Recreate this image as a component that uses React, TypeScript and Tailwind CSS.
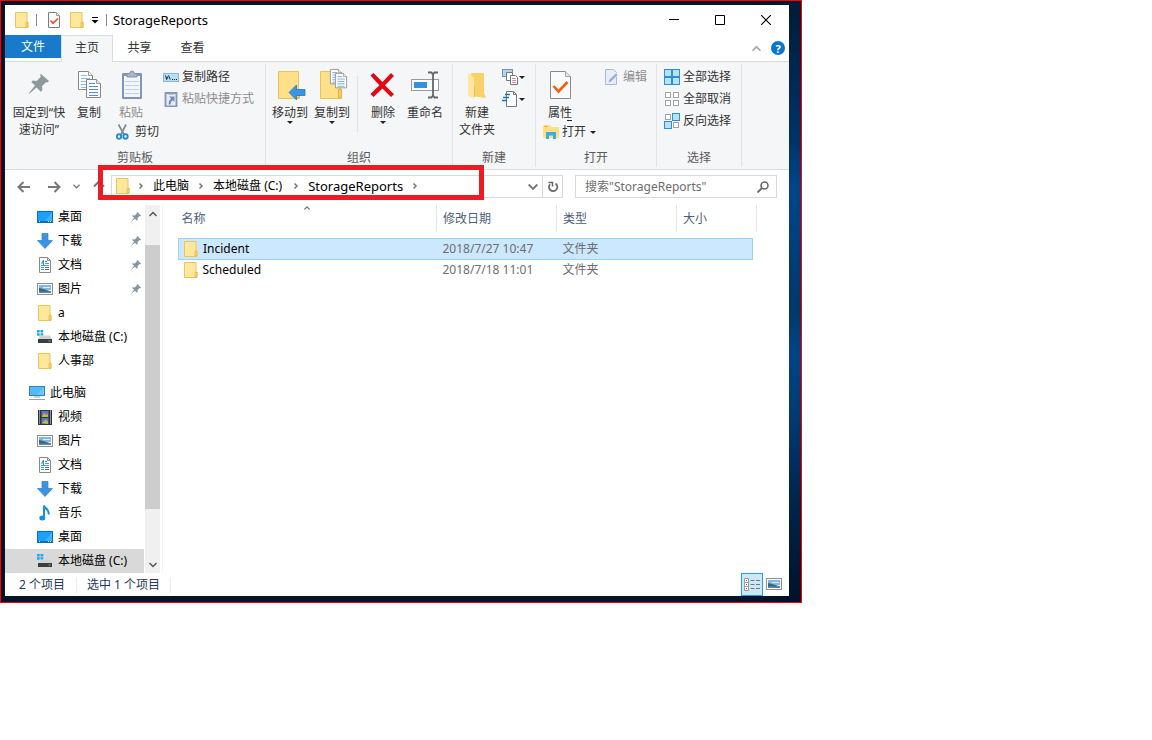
import React from 'react';

type IconProps = { className?: string };

const FolderIcon = ({ className = 'h-4 w-4' }: IconProps) => (
  <svg viewBox="0 0 16 16" className={className} aria-hidden="true">
    <path d="M1.500.500h11.500v9.500h1v5.500H1.500z" fill="#ffe79d" stroke="#e8c65c" />
    <path d="M12 15V10.500h2V15z" fill="#fbdc7a" stroke="#e3b93f" strokeWidth=".8" />
  </svg>
);

const CheckDocIcon = ({ className = 'h-4 w-4' }: IconProps) => (
  <svg viewBox="0 0 16 16" className={className} aria-hidden="true">
    <path d="M1.500.500h8l3 3v12h-11z" fill="#fff" stroke="#7d7d7d" />
    <path d="M9.500.500v3h3" fill="#eee" stroke="#8c8c8c" strokeWidth=".8" />
    <path d="m3.500 8.500 2.500 2.700L11 6.500" fill="none" stroke="#f0531c" strokeWidth="1.700" />
  </svg>
);

const PropertiesIcon = () => (
  <svg viewBox="0 0 32 32" className="h-8 w-8" aria-hidden="true">
    <path d="M6.500 3.500h15l5 5v22h-20z" fill="#fbfbfb" stroke="#8a8a8a" />
    <path d="M21.500 3.500v5h5" fill="#e6e6e6" stroke="#a5a5a5" />
    <path d="m9.500 18 5 5.500 9-9.500" fill="none" stroke="#f2600c" strokeWidth="2.600" />
  </svg>
);

const PinIcon = ({ className = 'h-8 w-8', color = '#8d999f' }: IconProps & { color?: string }) => (
  <svg viewBox="0 0 20 20" className={className} aria-hidden="true">
    <path d="M12 0 20 7l-1.200 1.400-1.600-.4-4.200 4.300.4 3.900-1.600 1.500-4.300-4.200L1.200 19 0 20l.6-1.700L6 11.600 2.300 8l1.500-1.600 3.800.5 4.300-4.200L11 1z" fill={color} />
  </svg>
);

const Sheet = ({ x, y, line = '#5c9cdc' }: { x: number; y: number; line?: string }) => (
  <g transform={`translate(${x} ${y})`}>
    <path d="M.5.500h10l4 4v14H.5z" fill="#fff" stroke="#858585" />
    <path d="M10.500.500v4h4" fill="#eee" stroke="#9a9a9a" />
    <path d="M3 4.500h6M3 7.500h9M3 10.500h9M3 13.500h9M3 16.500h9" stroke={line} />
  </g>
);

const CopyIcon = () => (
  <svg viewBox="0 0 32 32" className="h-8 w-8" aria-hidden="true">
    <Sheet x={5} y={3} line="#8ebbe8" />
    <Sheet x={13} y={11} line="#4a90dd" />
  </svg>
);

const PasteIcon = () => (
  <svg viewBox="0 0 32 32" className="h-8 w-8" aria-hidden="true">
    <rect x="7" y="5" width="20" height="26" rx="1" fill="#8194b8" />
    <rect x="9" y="8" width="16" height="21" fill="#f2f6fb" />
    <path d="M10 13.500h14M10 17.500h14M10 21.500h14M10 25.500h14" stroke="#c3d1e6" />
    <path d="M12 9V6l3-1a2 2 0 0 1 4 0l3 1v3z" fill="#a9b4c6" stroke="#8592a8" />
  </svg>
);

const ScissorsIcon = () => (
  <svg viewBox="0 0 16 16" className="h-4 w-4" aria-hidden="true">
    <path d="M2.500.500 8 10.500M10 .500 5 10.500" stroke="#7b8b9c" strokeWidth="1.700" />
    <circle cx="3" cy="12.500" r="2.200" fill="none" stroke="#1f8fc9" strokeWidth="1.900" />
    <circle cx="9.500" cy="12.500" r="2.200" fill="none" stroke="#1f8fc9" strokeWidth="1.900" />
  </svg>
);

const PathIcon = () => (
  <svg viewBox="0 0 16 16" className="h-4 w-4" aria-hidden="true">
    <rect x=".5" y="4.500" width="15" height="8" fill="#b5defa" stroke="#85b9dd" />
    <path d="m2.500 6.500 1.200 4 1-3M5.500 6.500l1.700 4" fill="none" stroke="#222" />
    <path d="M9 10.500h1M11 10.500h1M13 10.500h1" stroke="#222" />
  </svg>
);

const PasteLinkIcon = () => (
  <svg viewBox="0 0 16 16" className="h-4 w-4" aria-hidden="true">
    <path d="M2.500 2h11v13.300h-11z" fill="#e6ecf6" stroke="#8596b4" strokeWidth="1.800" />
    <path d="M5.500 3V1.500h5V3z" fill="#9dabc3" stroke="#8596b4" />
    <path d="M6 5.500h5.500V11L9.800 9.300Q7.500 10.500 7.500 13.500H5.500q0-3.800 2.400-5.900z" fill="#6f8abf" />
  </svg>
);

const BigFolder = () => (
  <>
    <path d="M4.500 3.500h20v18h1v9h-21z" fill="#ffe08a" stroke="#e8c35a" />
    <path d="M22.500 30v-8.500h3V30z" fill="#f5cf62" stroke="#dfb440" />
  </>
);

const MoveToIcon = () => (
  <svg viewBox="0 0 32 32" className="h-8 w-8" aria-hidden="true">
    <BigFolder />
    <path d="M15 24.500 22.500 17v4.500H31v6h-8.500V32z" fill="#3c95e4" stroke="#2676bd" strokeWidth=".8" />
  </svg>
);

const CopyToIcon = () => (
  <svg viewBox="0 0 32 32" className="h-8 w-8" aria-hidden="true">
    <BigFolder />
    <g transform="translate(14 1) scale(.8)"><Sheet x={0} y={0} /></g>
    <g transform="translate(19 5) scale(.8)"><Sheet x={0} y={0} /></g>
  </svg>
);

const DeleteIcon = () => (
  <svg viewBox="0 0 32 32" className="h-8 w-8" aria-hidden="true">
    <path d="m3.500 7.500 3-2.500L15.500 14 24 5l3 3-9 9.300 9 9-3 2.700-8.500-8.500L6.500 29l-3-3 8.800-8.700z" fill="#e30613" />
  </svg>
);

const RenameIcon = () => (
  <svg viewBox="0 0 32 32" className="h-8 w-8" aria-hidden="true">
    <rect x="2.500" y="11.500" width="27" height="11" fill="#fff" stroke="#9a9a9a" />
    <rect x="5" y="14" width="13" height="6" fill="#3591e0" />
    <path d="M19 4.500h3.500l1.500 2 1.500-2H29M19 29.500h3.500l1.500-2 1.500 2H29M24 5v24" fill="none" stroke="#666" strokeWidth="1.800" />
  </svg>
);

const NewFolderIcon = () => (
  <svg viewBox="0 0 32 32" className="h-8 w-8" aria-hidden="true">
    <path d="M10 5h13v20l2 5-15-2z" fill="#f9d06a" />
    <path d="M7 5l6 4.500V31l-6-3.500z" fill="#ffe5a0" />
    <path d="M13 29V18h1v11z" fill="#efbe4c" />
  </svg>
);

const NewItemIcon = () => (
  <svg viewBox="0 0 16 16" className="h-4 w-4" aria-hidden="true">
    <rect x=".5" y=".5" width="10" height="7" fill="#a9d6f5" stroke="#7893a8" />
    <path d="M4.500 3.500h6v8h-6z" fill="#fff" stroke="#777" />
    <path d="M8.500 6.500h5l2 2v7h-7z" fill="#fff" stroke="#777" />
    <path d="M10 9.500h4M10 11.500h4M10 13.500h4" stroke="#e58b8b" />
  </svg>
);

const EasyAccessIcon = () => (
  <svg viewBox="0 0 16 16" className="h-4 w-4" aria-hidden="true">
    <path d="M4.500.500h7l3 3v12h-10z" fill="#fff" stroke="#777" />
    <path d="M11.500.500v3h3" fill="none" stroke="#777" />
    <path d="M3 3.500h5M1 6.500h6M0 9.500h5" stroke="#1f73b7" strokeWidth="1.400" />
  </svg>
);

const EditIcon = () => (
  <svg viewBox="0 0 16 16" className="h-4 w-4" aria-hidden="true">
    <path d="M1.500.500h8l3 3v12h-11z" fill="#e8eef8" stroke="#a9b8d4" />
    <path d="m4 14 1-3.500 7-6.500 2 2-7 7z" fill="#9db0d2" stroke="#eef3fa" strokeWidth=".6" />
  </svg>
);

const OpenIcon = () => (
  <svg viewBox="0 0 16 16" className="h-4 w-4" aria-hidden="true">
    <path d="M0 1h7l2 2h7v11H0z" fill="#ffe184" />
    <path d="M1.500 2.500h3" stroke="#f29f1f" />
    <path d="M3 15V8h10v7h-3v-3.500H6V15z" fill="#39aee3" />
  </svg>
);

const SelectIcon = ({ on }: { on: [boolean, boolean, boolean, boolean] }) => (
  <svg viewBox="0 0 16 16" className="h-4 w-4" aria-hidden="true">
    {on.map((active, i) => {
      const x = i % 2 === 0 ? 0 : 8;
      const y = i < 2 ? 0 : 8;
      return active ? (
        <rect key={i} x={x + 0.5} y={y + 0.5} width="7" height="7" fill="#b9e1fb" stroke="#2b8fdc" />
      ) : (
        <rect key={i} x={x + 1.5} y={y + 1.5} width="5" height="5" fill="#fff" stroke="#a3a3a3" />
      );
    })}
  </svg>
);

const DesktopIcon = () => (
  <svg viewBox="0 0 16 16" className="h-4 w-4" aria-hidden="true">
    <rect x=".5" y="2.500" width="15" height="11" fill="#1ba1fb" stroke="#0b6fba" />
    <path d="M15 3v9H8z" fill="#3fb1fe" />
    <path d="M1 12.500h14" stroke="#0a6bb0" />
    <path d="M2 12.500h1M11 12.500h1M13 12.500h1" stroke="#cfeaff" />
  </svg>
);

const DownloadIcon = () => (
  <svg viewBox="0 0 16 16" className="h-4 w-4" aria-hidden="true">
    <path d="M5 .500h6v7h4.500L8 15.500.500 7.500H5z" fill="#3b94e0" stroke="#2b7fca" strokeWidth=".7" />
  </svg>
);

const DocumentIcon = () => (
  <svg viewBox="0 0 16 16" className="h-4 w-4" aria-hidden="true">
    <path d="M2.500.500h8l3 3v12h-11z" fill="#fff" stroke="#888" />
    <path d="M10.500.500v3h3" fill="none" stroke="#888" />
    <path d="M4 8.500h8M4 12.500h3M4 10.500h3M8 4.500h2M8 6.500h4" stroke="#3da0df" />
    <path d="M4.500 6.500 6.500 3v5M4.500 6h2.500" fill="none" stroke="#2e96d8" />
    <path d="M8 10.500h4M8 12.500h4" stroke="#667" />
  </svg>
);

const PictureIcon = () => (
  <svg viewBox="0 0 16 16" className="h-4 w-4" aria-hidden="true">
    <rect x=".5" y="2.500" width="15" height="11" fill="#fff" stroke="#8e8e8e" />
    <path d="M2 4h12v5H2z" fill="#7fb8ee" />
    <path d="M6 6.500h7" stroke="#dcecfb" />
    <path d="M2 7q4 .5 12 3.500V12H2z" fill="#3c6b62" />
    <path d="M2 10.500h12V12H2z" fill="#5a86b8" />
  </svg>
);

const DriveIcon = () => (
  <svg viewBox="0 0 16 16" className="h-4 w-4" aria-hidden="true">
    <path d="M0 1h2.700v2.500H0zM3.500 1h2.700v2.500H3.500zM0 4.300h2.700v2.500H0zM3.500 4.300h2.700v2.500H3.500z" fill="#16a9ec" />
    <path d="M3 6.500h10l2 4H1z" fill="#cfd1d3" />
    <rect x="1" y="10" width="14" height="4" fill="#3b3d40" />
    <path d="M11.500 12h2" stroke="#52e052" />
  </svg>
);

const ComputerIcon = () => (
  <svg viewBox="0 0 16 16" className="h-4 w-4" aria-hidden="true">
    <rect x=".5" y="1.500" width="15" height="9" fill="#4cbcfb" stroke="#3b7fac" />
    <path d="M15 2v8H8z" fill="#6cc9fc" />
    <path d="M5 12h6M0 14.500h16" stroke="#8fa3b5" />
  </svg>
);

const VideoIcon = () => (
  <svg viewBox="0 0 16 16" className="h-4 w-4" aria-hidden="true">
    <rect x="1" y="1" width="14" height="15" fill="#333" />
    <path d="M2.500 1.500v14M13.500 1.500v14" stroke="#eee" strokeDasharray="1 1" />
    <path d="M4.500 2h7v6h-7zM4.500 9h7v6h-7z" fill="#4f7bd6" />
    <path d="M5 7l2.500-3L9 6l2-1v3H5zM5 14l3-3 3 1v3z" fill="#c3bb3c" />
    <path d="M8 4h2v1.500H8z" fill="#e4572e" />
  </svg>
);

const MusicIcon = () => (
  <svg viewBox="0 0 16 16" className="h-4 w-4" aria-hidden="true">
    <path d="M7 13V.500c.5 3.500 6 3.500 4.500 9" fill="none" stroke="#1490df" strokeWidth="2" />
    <ellipse cx="5.300" cy="13" rx="3" ry="2.500" fill="#1490df" />
  </svg>
);

const Chevron = ({ dir, className = 'h-2 w-2', color = '#555' }: IconProps & { dir: 'up' | 'down' | 'right'; color?: string }) => (
  <svg viewBox="0 0 8 8" className={className} aria-hidden="true">
    <path
      d={dir === 'up' ? 'M.5 6 4 2.500 7.500 6' : dir === 'down' ? 'M.5 2 4 5.500 7.500 2' : 'M2.500 1.500 5 4 2.500 6.500'}
      fill="none"
      stroke={color}
      strokeWidth="1.500"
    />
  </svg>
);

const Caret = () => (
  <svg viewBox="0 0 6 3" className="h-[3px] w-[6px]" aria-hidden="true">
    <path d="M0 0h6L3 3z" fill="#222" />
  </svg>
);

const Arrow = ({ dir }: { dir: 'left' | 'right' | 'up' }) => (
  <svg viewBox="0 0 14 14" className="h-[14px] w-[14px]" aria-hidden="true">
    <path
      d={dir === 'left' ? 'M13 7H2M6.500 2 1.500 7l5 5' : dir === 'right' ? 'M1 7h11M7.500 2l5 5-5 5' : 'M7 13V2M2 6.500l5-5 5 5'}
      fill="none"
      stroke="#777"
      strokeWidth="2"
    />
  </svg>
);

type BigProps = { icon: React.ReactNode; lines: string[]; caret?: boolean; width: string; muted?: boolean };
const BigButton = ({ icon, lines, caret, width, muted }: BigProps) => (
  <button type="button" className={`flex flex-col items-center leading-[17px] ${width} ${muted ? 'text-[#8d8d8d]' : 'text-[#333]'}`}>
    <span className="mb-1 block">{icon}</span>
    {lines.map((line) => (
      <span key={line} className="block whitespace-nowrap">{line}</span>
    ))}
    {caret && <Caret />}
  </button>
);

type SmallProps = { icon: React.ReactNode; label: string; muted?: boolean; caret?: boolean };
const SmallButton = ({ icon, label, muted, caret }: SmallProps) => (
  <button type="button" className={`flex h-[22px] items-center gap-[3px] whitespace-nowrap ${muted ? 'text-[#8d8d8d]' : 'text-[#333]'}`}>
    {icon}
    <span>{label}</span>
    {caret && <span className="ml-px"><Caret /></span>}
  </button>
);

const Group = ({ label, width, children }: { label: string; width: string; children: React.ReactNode }) => (
  <section aria-label={label} className={`my-[2px] flex shrink-0 flex-col border-r border-[#e2e3e4] pt-[2px] ${width}`}>
    <div className="flex flex-1">{children}</div>
    <div className="h-[18px] text-center leading-[18px] text-[#5a5a5a]">{label}</div>
  </section>
);

const Divider = () => <span className="h-3 w-px bg-[#8a8a8a]" />;

type TreeItem = { label: string; icon: React.ReactNode; pinned?: boolean; root?: boolean; selected?: boolean };

const quickAccess: TreeItem[] = [
  { label: '桌面', icon: <DesktopIcon />, pinned: true },
  { label: '下载', icon: <DownloadIcon />, pinned: true },
  { label: '文档', icon: <DocumentIcon />, pinned: true },
  { label: '图片', icon: <PictureIcon />, pinned: true },
  { label: 'a', icon: <FolderIcon /> },
  { label: '本地磁盘 (C:)', icon: <DriveIcon /> },
  { label: '人事部', icon: <FolderIcon /> },
];

const thisPc: TreeItem[] = [
  { label: '此电脑', icon: <ComputerIcon />, root: true },
  { label: '视频', icon: <VideoIcon /> },
  { label: '图片', icon: <PictureIcon /> },
  { label: '文档', icon: <DocumentIcon /> },
  { label: '下载', icon: <DownloadIcon /> },
  { label: '音乐', icon: <MusicIcon /> },
  { label: '桌面', icon: <DesktopIcon /> },
  { label: '本地磁盘 (C:)', icon: <DriveIcon />, selected: true },
];

const Tree = ({ items }: { items: TreeItem[] }) => (
  <ul>
    {items.map((item) => (
      <li key={item.label}>
        <button
          type="button"
          className={`flex h-6 w-full items-center gap-[5px] pr-[3px] ${item.root ? 'pl-6' : 'pl-8'} ${item.selected ? 'bg-[#d9d9d9]' : ''}`}
        >
          {item.icon}
          <span className="flex-1 text-left whitespace-nowrap">{item.label}</span>
          {item.pinned && <PinIcon className="h-[10px] w-[10px]" color="#8795a1" />}
        </button>
      </li>
    ))}
  </ul>
);

const files = [
  { name: 'Incident', date: '2018/7/27 10:47', kind: '文件夹', selected: true },
  { name: 'Scheduled', date: '2018/7/18 11:01', kind: '文件夹', selected: false },
];

const TitleBar = () => (
  <header className="flex h-[30px] items-center bg-white">
    <div className="flex items-center pl-[9px]">
      <FolderIcon />
      <span className="mr-[10px] ml-[6px] flex"><Divider /></span>
      <CheckDocIcon />
      <span className="ml-[6px]"><FolderIcon /></span>
      <button type="button" aria-label="自定义快速访问工具栏" className="mr-[7px] ml-[6px]">
        <svg viewBox="0 0 8 8" className="h-2 w-2" aria-hidden="true">
          <path d="M1 1.500h6" stroke="#000" />
          <path d="M.5 4h7L4 7.500z" fill="#000" />
        </svg>
      </button>
      <span className="flex"><Divider /></span>
      <h1 className="ml-[6px] text-[13px] text-black">StorageReports</h1>
    </div>
    <div className="ml-auto flex h-full">
      <button type="button" aria-label="最小化" className="flex w-[46px] items-center justify-center">
        <svg viewBox="0 0 10 10" className="h-[10px] w-[10px]"><path d="M0 4.500h10" stroke="#000" /></svg>
      </button>
      <button type="button" aria-label="最大化" className="flex w-[46px] items-center justify-center">
        <svg viewBox="0 0 10 10" className="h-[10px] w-[10px]"><path d="M.5.500h9v9h-9z" fill="none" stroke="#000" /></svg>
      </button>
      <button type="button" aria-label="关闭" className="flex w-[46px] items-center justify-center">
        <svg viewBox="0 0 10 10" className="h-[10px] w-[10px]"><path d="m0 0 10 10M10 0 0 10" stroke="#000" strokeWidth="1.200" /></svg>
      </button>
    </div>
  </header>
);

const TabBar = () => (
  <nav className="flex h-[27px] items-start border-b border-[#dadbdc] bg-white text-[#333]">
    <button type="button" className="h-[23px] w-14 bg-[#1979ca] text-white">文件</button>
    <button type="button" className="-mb-px h-[27px] w-[52px] border-x border-t border-[#dadbdc] bg-[#f5f6f7] pb-[3px]">主页</button>
    <button type="button" className="h-[25px] w-[53px]">共享</button>
    <button type="button" className="h-[25px] w-[53px]">查看</button>
    <div className="ml-auto flex h-[26px] items-center gap-[10px] pr-1">
      <button type="button" aria-label="最小化功能区"><Chevron dir="up" className="h-[9px] w-[9px]" color="#aaa" /></button>
      <button type="button" aria-label="帮助" className="flex h-[14px] w-[14px] items-center justify-center rounded-full bg-[#0a74d1] text-[11px] leading-none font-bold text-white">?</button>
    </div>
  </nav>
);

const Ribbon = () => (
  <div className="flex h-[108px] overflow-hidden border-b border-[#dadbdc] bg-[#f5f6f7]">
    <Group label="剪贴板" width="w-[261px]">
      <div className="flex pt-[2px] pl-1">
        <BigButton width="w-[60px]" icon={<span className="flex h-8 w-8 items-center justify-center"><PinIcon className="h-5 w-5" /></span>} lines={['固定到“快', '速访问”']} />
        <BigButton width="w-10" icon={<CopyIcon />} lines={['复制']} />
      </div>
      <div className="flex w-[54px] flex-col items-start pt-[2px] pl-[2px]">
        <BigButton width="w-10" icon={<PasteIcon />} lines={['粘贴']} muted />
        <span className="pl-[5px]"><SmallButton icon={<ScissorsIcon />} label="剪切" /></span>
      </div>
      <div className="flex flex-col">
        <SmallButton icon={<PathIcon />} label="复制路径" />
        <SmallButton icon={<PasteLinkIcon />} label="粘贴快捷方式" muted />
      </div>
    </Group>
    <Group label="组织" width="w-[187px]">
      <div className="flex items-start pt-[2px] pl-[3px]">
        <BigButton width="w-[42px]" icon={<MoveToIcon />} lines={['移动到']} caret />
        <BigButton width="w-[42px]" icon={<CopyToIcon />} lines={['复制到']} caret />
        <span className="mx-1 mt-2 h-14 w-px bg-[#e2e3e4]" />
        <BigButton width="w-[42px]" icon={<DeleteIcon />} lines={['删除']} caret />
        <BigButton width="w-[42px]" icon={<RenameIcon />} lines={['重命名']} />
      </div>
    </Group>
    <Group label="新建" width="w-[83px]">
      <div className="pt-[2px]"><BigButton width="w-12" icon={<NewFolderIcon />} lines={['新建', '文件夹']} /></div>
      <div className="flex flex-col pl-px">
        <button type="button" aria-label="新建项目" className="flex h-[22px] items-center gap-px"><NewItemIcon /><Caret /></button>
        <button type="button" aria-label="轻松访问" className="flex h-[22px] items-center gap-px"><EasyAccessIcon /><Caret /></button>
      </div>
    </Group>
    <Group label="打开" width="w-[121px]">
      <div className="flex flex-1 items-start justify-between pr-[9px] pl-[7px]">
        <div className="flex flex-col pt-[2px]">
          <BigButton width="w-[34px]" icon={<PropertiesIcon />} lines={['属性']} />
          <span className="mx-auto -mt-px h-px w-[5px] bg-[#222]" />
          <SmallButton icon={<OpenIcon />} label="打开" caret />
        </div>
        <SmallButton icon={<EditIcon />} label="编辑" muted />
      </div>
    </Group>
    <Group label="选择" width="w-[85px]">
      <div className="flex flex-col pl-[7px]">
        <SmallButton icon={<SelectIcon on={[true, true, true, true]} />} label="全部选择" />
        <SmallButton icon={<SelectIcon on={[false, false, false, false]} />} label="全部取消" />
        <SmallButton icon={<SelectIcon on={[false, true, true, false]} />} label="反向选择" />
      </div>
    </Group>
  </div>
);

const AddressBar = () => (
  <div className="flex h-[35px] items-start bg-white pt-[5px] pr-3 pl-3">
    <div className="flex h-[23px] w-[94px] shrink-0 items-center">
      <button type="button" aria-label="后退" className="mr-4"><Arrow dir="left" /></button>
      <button type="button" aria-label="前进" className="mr-3"><Arrow dir="right" /></button>
      <button type="button" aria-label="最近位置" className="mr-3"><Chevron dir="down" className="h-[7px] w-[7px]" color="#777" /></button>
      <button type="button" aria-label="向上"><Arrow dir="up" /></button>
    </div>
    <div className="flex h-[23px] flex-1 items-center border border-[#d9d9d9] pb-px text-black">
      <span className="ml-[3px]"><FolderIcon /></span>
      <span className="mr-2 ml-[6px]"><Chevron dir="right" color="#777" /></span>
      <button type="button">此电脑</button>
      <span className="mx-2"><Chevron dir="right" color="#777" /></span>
      <button type="button" className="whitespace-nowrap">本地磁盘 (C:)</button>
      <span className="mr-2 ml-[10px]"><Chevron dir="right" color="#777" /></span>
      <button type="button" className="text-[13px]">StorageReports</button>
      <span className="ml-2"><Chevron dir="right" color="#777" /></span>
      <button type="button" aria-label="以前的位置" className="-mb-px ml-auto flex h-[21px] w-[19px] items-center justify-center border-r border-[#d9d9d9]"><Chevron dir="down" className="h-[10px] w-[10px]" color="#777" /></button>
      <button type="button" aria-label="刷新" className="-mb-px flex h-[21px] w-[19px] items-center justify-center">
        <svg viewBox="0 0 12 12" className="h-3 w-3" aria-hidden="true">
          <path d="M8.500 2.500a4.200 4.200 0 1 1-5.500.700" fill="none" stroke="#666" strokeWidth="1.700" />
          <path d="M1.500 1.500h4v4" fill="none" stroke="#666" strokeWidth="1.500" />
        </svg>
      </button>
    </div>
    <label className="ml-3 flex h-[23px] w-[202px] items-center border border-[#d9d9d9] pr-[7px] pl-[9px]">
      <input aria-label="搜索" type="text" placeholder={'搜索"StorageReports"'} className="min-w-0 flex-1 text-[12px] outline-none placeholder:text-[#6d6d6d]" />
      <svg viewBox="0 0 12 12" className="h-3 w-3" aria-hidden="true">
        <circle cx="7.500" cy="4.500" r="3.500" fill="none" stroke="#666" strokeWidth="1.500" />
        <path d="m5 7-4.500 4.500" stroke="#666" strokeWidth="1.800" />
      </svg>
    </label>
  </div>
);

const Sidebar = () => (
  <aside className="flex w-[158px] shrink-0 border-r border-[#f3f3f3] text-black">
    <div className="flex w-[139px] flex-col gap-2">
      <Tree items={quickAccess} />
      <Tree items={thisPc} />
    </div>
    <div className="ml-px flex w-[15px] flex-col bg-[#f0f0f0]">
      <button type="button" aria-label="向上滚动" className="flex h-[18px] items-center justify-center"><Chevron dir="up" /></button>
      <div className="mt-[22px] h-[264px] bg-[#cdcdcd]" />
      <button type="button" aria-label="向下滚动" className="mt-auto flex h-[17px] items-center justify-center"><Chevron dir="down" /></button>
    </div>
  </aside>
);

const FileList = () => (
  <main className="min-w-0 flex-1 pl-[15px]">
    <table className="w-[578px] table-fixed border-collapse text-left">
      <colgroup>
        <col className="w-[258px]" />
        <col className="w-[120px]" />
        <col className="w-[120px]" />
        <col className="w-[76px]" />
        <col className="w-1" />
      </colgroup>
      <thead>
        <tr className="h-[27px] text-[#4c607a]">
          <th className="relative border-r border-[#e5e5e5] pl-[3px] font-normal">
            名称
            <span className="absolute top-0 left-1/2 -ml-1"><Chevron dir="up" color="#777" className="block h-[6px] w-2" /></span>
          </th>
          <th className="border-r border-[#e5e5e5] pl-[6px] font-normal">修改日期</th>
          <th className="border-r border-[#e5e5e5] pl-[6px] font-normal">类型</th>
          <th colSpan={2} className="border-r border-[#e5e5e5] pl-[6px] font-normal">大小</th>
        </tr>
      </thead>
      <tbody className="text-[#6d6d6d] before:block before:h-[6px]">
        {files.map((file) => {
          const cell = file.selected ? 'border-y border-[#99d1ff] bg-[#cce8ff]' : '';
          return (
            <tr key={file.name} className="h-[21px] leading-[18px]">
              <td className={`${cell} pb-px pl-[4px] text-black ${file.selected ? 'border-l' : ''}`}>
                <span className="flex items-center gap-[4px]"><FolderIcon />{file.name}</span>
              </td>
              <td className={`${cell} pb-px pl-[6px]`}>{file.date}</td>
              <td className={`${cell} pb-px pl-[6px]`}>{file.kind}</td>
              <td className={`${cell} ${file.selected ? 'border-r' : ''}`} />
              <td />
            </tr>
          );
        })}
      </tbody>
    </table>
  </main>
);

const StatusBar = () => (
  <footer className="flex h-[23px] items-center bg-white pl-[14px] text-[#1e395b]">
    <span className="border-r border-[#ececec] pr-[11px] leading-[16px]">2 个项目</span>
    <span className="border-r border-[#ececec] px-[10px] leading-[16px]">选中 1 个项目</span>
    <div className="ml-auto flex h-full items-center pr-[7px]">
      <button type="button" aria-label="详细信息" className="flex h-[23px] w-[22px] items-center justify-center border border-[#26a0da] bg-[#cbe8f6]">
        <svg viewBox="0 0 16 14" className="h-[14px] w-4" aria-hidden="true">
          <path d="M.5.500h4v4h-4zM.5 4.500h4v4h-4zM.5 8.500h4v4h-4z" fill="#fff" stroke="#999" />
          <path d="M2 2.500h1" stroke="#555" /><path d="M2 6.500h1" stroke="#36c" /><path d="M2 10.500h1" stroke="#d22" />
          <path d="M6.500 2.500h4M12 2.500h4M6.500 6.500h4M12 6.500h4M6.500 10.500h4M12 10.500h4" stroke="#777" />
        </svg>
      </button>
      <button type="button" aria-label="大图标" className="ml-[3px] flex items-center pb-[2px]"><PictureIcon /></button>
    </div>
  </footer>
);

export default function App() {
  return (
    <div className="min-h-screen bg-white font-['Noto_Sans','Noto_Sans_CJK_SC',sans-serif] text-[12px] leading-[18px]" lang="zh-CN">
      <div className="w-full max-w-[802px] border border-[#ff0000] bg-[linear-gradient(to_bottom,#021a36_0%,#003468_24%,#004688_31%,#003a70_46%,#003765_51%,#004384_58%,#003c72_68%,#01264c_82%,#00122a_100%)]">
        <div className="bg-linear-to-r from-[#06142a] from-95% to-transparent to-98% pt-1 pr-3 pb-[6px] pl-1">
          <div className="relative flex flex-col bg-white">
            <TitleBar />
            <TabBar />
            <Ribbon />
            <AddressBar />
            <div className="flex bg-white">
              <Sidebar />
              <FileList />
            </div>
            <StatusBar />
            <div className="pointer-events-none absolute top-[160px] left-[93px] h-[35px] w-[386px] border-[5px] border-[#ed1c24]" />
          </div>
        </div>
      </div>
    </div>
  );
}
